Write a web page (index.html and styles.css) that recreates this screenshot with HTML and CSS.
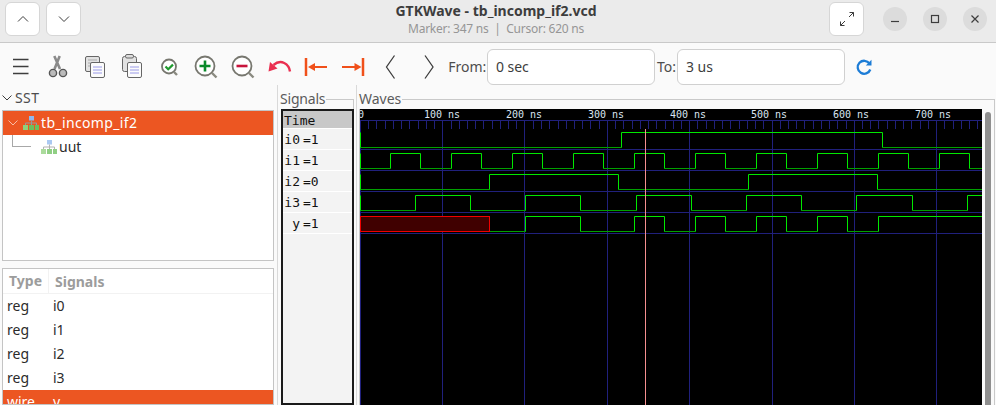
FILE: index.html
```html
<!DOCTYPE html>
<html lang="en">
<head>
  <meta charset="UTF-8">
  <meta name="viewport" content="width=device-width, initial-scale=1.0">
  <title>GTKWave - tb_incomp_if2.vcd</title>
  <link rel="stylesheet" href="styles.css">
</head>
<body>
  <!-- Title bar -->
  <header class="titlebar">
    <div class="title-left">
      <button class="head-btn"><svg width="16" height="16" viewBox="0 0 16 16"><path class="thin" d="M3 10.5 8 5.5l5 5"/></svg></button>
      <button class="head-btn"><svg width="16" height="16" viewBox="0 0 16 16"><path class="thin" d="M3 5.5l5 5 5-5"/></svg></button>
    </div>
    <div class="title-text">
      <div class="title-main">GTKWave - tb_incomp_if2.vcd</div>
      <div class="title-sub">Marker: 347 ns &nbsp;|&nbsp; Cursor: 620 ns</div>
    </div>
    <div class="title-right">
      <button class="head-btn expand"><svg width="18" height="18" viewBox="0 0 18 18"><path class="thin" d="M2.5 15.5 7 11M2.5 11.5v4h4M15.500 2.500 11 7M11.500 2.500h4v4"/></svg></button>
      <div class="win-btns">
        <button class="win-btn"><svg width="12" height="12" viewBox="0 0 12 12"><path class="win-stroke" d="M2 8.500h8"/></svg></button>
        <button class="win-btn"><svg width="12" height="12" viewBox="0 0 12 12"><rect class="win-stroke" x="2.500" y="2.500" width="7" height="7"/></svg></button>
        <button class="win-btn"><svg width="12" height="12" viewBox="0 0 12 12"><path class="win-stroke" d="M2.500 2.500l7 7M9.500 2.500l-7 7"/></svg></button>
      </div>
    </div>
  </header>

  <!-- Toolbar -->
  <div class="toolbar">
    <div class="tool"><svg width="32" height="32" viewBox="0 0 32 32"><path class="ink" d="M8 8.500h15.500M8 15.500h15.500M8 22.500h15.500"/></svg></div>
    <div class="tool"><svg width="32" height="32" viewBox="0 0 32 32"><path d="M17.700 5 12.500 18M12.300 5l5.700 13" fill="none" stroke="#8a8a8a" stroke-width="2.600"/><circle cx="11" cy="22" r="3.600" fill="#bbb" stroke="#555" stroke-width="1.400"/><circle cx="21" cy="22" r="3.600" fill="#bbb" stroke="#555" stroke-width="1.400"/></svg></div>
    <div class="tool"><svg width="32" height="32" viewBox="0 0 32 32"><rect class="page-back" x="6.500" y="5.500" width="14" height="15" rx="1.500"/><path d="M9 9h9M9 12h9M9 15h9" stroke="#aaa" fill="none"/><rect class="page-front" x="11.500" y="11.500" width="14" height="15" rx="1.500"/><path class="page-lines" d="M14 16h9M14 19h9M14 22h9"/></svg></div>
    <div class="tool"><svg width="32" height="32" viewBox="0 0 32 32"><rect class="page-back" x="6.500" y="5.500" width="14" height="15" rx="2"/><rect x="9.500" y="3.500" width="8" height="3.500" rx="1.500" fill="#ddd" stroke="#666"/><rect class="page-front" x="11.500" y="11.500" width="14" height="15" rx="1.500"/><path class="page-lines" d="M14 16h9M14 19h9M14 22h9"/></svg></div>
    <div class="tool"><svg width="32" height="32" viewBox="0 0 32 32"><circle class="lens" cx="16" cy="15.500" r="7"/><path class="handle" d="M21 21l3 3"/><path d="M12.500 15.500l2.700 2.700 4.800-4.600" fill="none" stroke="#1f9a2e" stroke-width="2.200"/></svg></div>
    <div class="tool"><svg width="32" height="32" viewBox="0 0 32 32"><circle class="lens" cx="16" cy="15" r="9.500"/><path class="handle" d="M23 22l4.500 4.500"/><path d="M16 9.500v11M10.500 15h11" fill="none" stroke="#0a8a2a" stroke-width="2.600"/></svg></div>
    <div class="tool"><svg width="32" height="32" viewBox="0 0 32 32"><circle class="lens" cx="16" cy="15" r="9.500"/><path class="handle" d="M23 22l4.500 4.500"/><path d="M10.500 15h11" fill="none" stroke="#c8143c" stroke-width="2.600"/></svg></div>
    <div class="tool"><svg width="32" height="32" viewBox="0 0 32 32"><path d="M27 20.500C26 13 18 7.500 10.500 14" fill="none" stroke="#ea2f50" stroke-width="2.400"/><path d="M5.500 20.500 7 11l7.500 6.500z" fill="#ea2f50"/></svg></div>
    <div class="tool"><svg width="32" height="32" viewBox="0 0 32 32"><path class="orange-bar" d="M6 7v18"/><path class="orange-shaft" d="M13 16h14"/><path class="orange-head" d="M8 16l7-4v8z"/></svg></div>
    <div class="tool"><svg width="32" height="32" viewBox="0 0 32 32"><path class="orange-bar" d="M26 7v18"/><path class="orange-shaft" d="M5 16h14"/><path class="orange-head" d="M24.500 16l-7-4v8z"/></svg></div>
    <div class="tool"><svg width="32" height="32" viewBox="0 0 32 32"><path class="ink" d="M20.500 4.500 12.500 16l8 11.500"/></svg></div>
    <div class="tool"><svg width="32" height="32" viewBox="0 0 32 32"><path class="ink" d="M14 4.500 22 16l-8 11.500"/></svg></div>
    <label class="range-label">From:</label>
    <input class="range-input" type="text" value="0 sec" readonly>
    <label class="range-label to">To:</label>
    <input class="range-input" type="text" value="3 us" readonly>
    <div class="refresh"><svg width="20" height="20" viewBox="0 0 20 20"><path d="M15.500 6.500A6.500 6.500 0 1 0 16.300 12.500" fill="none" stroke="#1c7cd6" stroke-width="2.300"/><path d="M17.500 2.800v5.700h-5.700z" fill="#1c7cd6"/></svg></div>
  </div>

  <main class="panes">
    <!-- SST side -->
    <section class="pane-sst">
      <div class="sst-head"><svg width="10" height="10" viewBox="0 0 10 10"><path class="thin" d="M0.500 2.500 5 7l4.500-4.500"/></svg><span>SST</span></div>
      <div class="tree-box">
        <div class="tree-row selected">
          <svg class="tree-arrow" width="10" height="10" viewBox="0 0 10 10"><path d="M0.500 2.500 5 7l4.500-4.500" fill="none" stroke="#f9bda6"/></svg>
          <svg class="hier" width="16" height="14" viewBox="0 0 16 14"><use href="#hier-icon"/></svg>
          <span>tb_incomp_if2</span>
        </div>
        <div class="tree-row child">
          <span class="tree-line"></span>
          <svg class="hier" width="16" height="14" viewBox="0 0 16 14"><use href="#hier-icon"/></svg>
          <span>uut</span>
        </div>
      </div>
      <div class="list-box">
        <div class="list-row list-head"><span class="col-type">Type</span><span class="col-name">Signals</span></div>
        <div class="list-row"><span class="col-type">reg</span><span class="col-name">i0</span></div>
        <div class="list-row"><span class="col-type">reg</span><span class="col-name">i1</span></div>
        <div class="list-row"><span class="col-type">reg</span><span class="col-name">i2</span></div>
        <div class="list-row"><span class="col-type">reg</span><span class="col-name">i3</span></div>
        <div class="list-row selected"><span class="col-type">wire</span><span class="col-name">y</span></div>
      </div>
    </section>

    <!-- Signal names -->
    <section class="pane-signals">
      <div class="group-head"><span class="group-label">Signals</span><span class="group-line"></span></div>
      <div class="signal-box">
        <div class="sig-row sig-time">Time</div>
        <div class="sig-row"><span class="sig-name">i0</span><span>=1</span></div>
        <div class="sig-row"><span class="sig-name">i1</span><span>=1</span></div>
        <div class="sig-row"><span class="sig-name">i2</span><span>=0</span></div>
        <div class="sig-row"><span class="sig-name">i3</span><span>=1</span></div>
        <div class="sig-row"><span class="sig-name">y</span><span>=1</span></div>
      </div>
    </section>

    <!-- Waves -->
    <section class="pane-waves">
      <div class="group-head"><span class="group-label">Waves</span><span class="group-line"></span></div>
      <div class="wave-body">
        <svg class="wave-canvas" width="622" height="296" viewBox="0 0 622 296">
          <!-- time ruler -->
          <path class="grid" d="M0 11.500H622"/>
          <path class="grid" d="M0.500 11V296M82.500 11V296M164.500 11V296M247.500 11V296M329.500 11V296M412.500 11V296M494.500 11V296M576.500 11V296"/>
          <path class="grid" d="M8.500 11v9M16.500 11v9M25.500 11v9M33.500 11v9M41.500 11v9M49.500 11v9M58.500 11v9M66.500 11v9M74.500 11v9M91.500 11v9M99.500 11v9M107.500 11v9M115.500 11v9M123.500 11v9M132.500 11v9M140.500 11v9M148.500 11v9M156.500 11v9M173.500 11v9M181.500 11v9M189.500 11v9M198.500 11v9M206.500 11v9M214.500 11v9M222.500 11v9M230.500 11v9M239.500 11v9M255.500 11v9M263.500 11v9M272.500 11v9M280.500 11v9M288.500 11v9M296.500 11v9M305.500 11v9M313.500 11v9M321.500 11v9M337.500 11v9M346.500 11v9M354.500 11v9M362.500 11v9M370.500 11v9M379.500 11v9M387.500 11v9M395.500 11v9M403.500 11v9M420.500 11v9M428.500 11v9M436.500 11v9M444.500 11v9M453.500 11v9M461.500 11v9M469.500 11v9M477.500 11v9M486.500 11v9M502.500 11v9M510.500 11v9M518.500 11v9M527.500 11v9M535.500 11v9M543.500 11v9M551.500 11v9M560.500 11v9M568.500 11v9M584.500 11v9M593.500 11v9M601.500 11v9M609.500 11v9M617.500 11v9"/>
          <text class="ruler" x="-2" y="9">0</text>
          <text class="ruler" x="64" y="9">100 ns</text>
          <text class="ruler" x="146" y="9">200 ns</text>
          <text class="ruler" x="228" y="9">300 ns</text>
          <text class="ruler" x="310" y="9">400 ns</text>
          <text class="ruler" x="391" y="9">500 ns</text>
          <text class="ruler" x="473" y="9">600 ns</text>
          <text class="ruler" x="555" y="9">700 ns</text>
          <!-- row separators -->
          <path class="grid" d="M0 40.500H622M0 61.500H622M0 82.500H622M0 103.500H622M0 124.500H622"/>
          <!-- low levels -->
          <path class="wave-low" d="M0 38.500H261.500M522.500 38.500H622"/>
          <path class="wave-low" d="M0 59.500H30.500M60.500 59.500H91.500M121.500 59.500H152.500M182.500 59.500H213.500M243.500 59.500H274.500M304.500 59.500H335.500M365.500 59.500H396.500M426.500 59.500H457.500M487.500 59.500H518.500M548.500 59.500H579.500M609.500 59.500H622"/>
          <path class="wave-low" d="M0 80.500H129.500M258.500 80.500H388.500M517.500 80.500H622"/>
          <path class="wave-low" d="M0 101.500H55.500M110.500 101.500H165.500M220.500 101.500H276.500M331.500 101.500H386.500M441.500 101.500H496.500M552.500 101.500H607.500"/>
          <path class="wave-low" d="M129.500 122.500H165.500M220.500 122.500H274.500M304.500 122.500H335.500M365.500 122.500H396.500M426.500 122.500H457.500M487.500 122.500H518.500"/>
          <!-- high levels and edges -->
          <path class="wave-high" d="M0.500 23.500V38.500M261.500 38.500V23.500H522.500V38.500"/>
          <path class="wave-high" d="M0.500 44.500V59.500M30.500 59.500V44.500H60.500V59.500M91.500 59.500V44.500H121.500V59.500M152.500 59.500V44.500H182.500V59.500M213.500 59.500V44.500H243.500V59.500M274.500 59.500V44.500H304.500V59.500M335.500 59.500V44.500H365.500V59.500M396.500 59.500V44.500H426.500V59.500M457.500 59.500V44.500H487.500V59.500M518.500 59.500V44.500H548.500V59.500M579.500 59.500V44.500H609.500V59.500"/>
          <path class="wave-high" d="M0.500 65.500V80.500M129.500 80.500V65.500H258.500V80.500M388.500 80.500V65.500H517.500V80.500"/>
          <path class="wave-high" d="M0.500 86.500V101.500M55.500 101.500V86.500H110.500V101.500M165.500 101.500V86.500H220.500V101.500M276.500 101.500V86.500H331.500V101.500M386.500 101.500V86.500H441.500V101.500M496.500 101.500V86.500H552.500V101.500M607.500 101.500V86.500H622"/>
          <path class="wave-high" d="M165.500 122.500V107.500H220.500V122.500M274.500 122.500V107.500H304.500V122.500M335.500 122.500V107.500H365.500V122.500M396.500 122.500V107.500H426.500V122.500M457.500 122.500V107.500H487.500V122.500M518.500 122.500V107.500H622"/>
          <rect class="wave-x" x="0.500" y="107.500" width="129" height="15"/>
          <!-- marker -->
          <path class="marker" d="M285.500 20V296"/>
        </svg>
        <div class="scroll-track"><div class="scroll-thumb"></div></div>
      </div>
    </section>
  </main>

  <svg class="defs" width="0" height="0">
    <symbol id="hier-icon" viewBox="0 0 16 14">
      <rect x="6" y="0" width="5" height="4.500" fill="#8fb8ee"/>
      <path d="M8.500 4.500V7M2.500 9V7H13.500V9M8.500 7V9" fill="none" stroke="#999"/>
      <rect x="0" y="9" width="5" height="5" fill="#8fd07c"/>
      <rect x="6" y="9" width="5" height="5" fill="#6cc05c"/>
      <rect x="12" y="9" width="4" height="5" fill="#6cc05c"/>
    </symbol>
  </svg>
</body>
</html>
```

FILE: styles.css
```css
* {
  box-sizing: border-box;
}

html, body {
  height: 100%;
}

body {
  margin: 0;
  display: flex;
  flex-direction: column;
  overflow: hidden;
  background: #fafafa;
  color: #3d3d3d;
  font-family: "Noto Sans", sans-serif;
  font-size: 14px;
}

button {
  padding: 0;
  border: none;
  font: inherit;
}

.thin {
  fill: none;
  stroke: #3d3d3d;
  stroke-width: 1;
}

.defs {
  position: absolute;
}

/* title bar */
.titlebar {
  display: grid;
  grid-template-columns: 1fr auto 1fr;
  flex: none;
  height: 43px;
  padding: 2px 9px 0 5px;
  background: #ebebeb;
  border-bottom: 1px solid #c9c9c9;
}

.title-left {
  display: flex;
  gap: 6px;
}

.title-right {
  display: flex;
  justify-content: flex-end;
  gap: 19px;
}

.head-btn {
  display: flex;
  align-items: center;
  justify-content: center;
  width: 35px;
  height: 34px;
  background: #fff;
  border: 1px solid #d6d6d6;
  border-radius: 6px;
}

.win-btns {
  display: flex;
  gap: 16px;
  padding-top: 5px;
}

.win-btn {
  display: flex;
  align-items: center;
  justify-content: center;
  width: 24px;
  height: 24px;
  background: #dcdcdc;
  border-radius: 50%;
}

.win-stroke {
  fill: none;
  stroke: #3d3d3d;
  stroke-width: 1.2;
}

.title-text {
  text-align: center;
}

.title-main {
  font-size: 14px;
  font-weight: 700;
  line-height: 18px;
}

.title-sub {
  margin-top: 1px;
  font-size: 12px;
  line-height: 16px;
  letter-spacing: -0.25px;
  color: #969696;
}

/* toolbar */
.toolbar {
  display: flex;
  align-items: center;
  flex: none;
  height: 42px;
  padding: 5px 0 0 2.5px;
}

.tool {
  display: flex;
  justify-content: center;
  flex: none;
  width: 36.9px;
}

.ink {
  fill: none;
  stroke: #3d3d3d;
  stroke-width: 1.300;
}

.page-back {
  fill: #e2e2e2;
  stroke: #666;
}

.page-front {
  fill: #fbfbfb;
  stroke: #666;
}

.page-lines {
  fill: none;
  stroke: #9a9ae8;
}

.lens {
  fill: #fff;
  stroke: #77776f;
  stroke-width: 1.800;
}

.handle {
  fill: none;
  stroke: #8a8a80;
  stroke-width: 2.400;
}

.orange-bar {
  fill: none;
  stroke: #f0501a;
  stroke-width: 2.500;
}

.orange-shaft {
  fill: none;
  stroke: #f0501a;
  stroke-width: 2;
}

.orange-head {
  fill: #f0501a;
}

.range-label {
  margin-left: 3px;
  width: 36.7px;
  flex: none;
  color: #4d4d4d;
}

.range-label.to {
  margin-left: 2px;
  width: 18px;
}

.range-input {
  flex: none;
  width: 168px;
  height: 36px;
  padding: 0 8px;
  background: #fff;
  border: 1px solid #d0d0d0;
  border-radius: 6px;
  color: #3d3d3d;
  font: inherit;
  outline: none;
}

.range-label + .range-input {
  margin-left: 2px;
}

.refresh {
  display: flex;
  margin-left: 9px;
}

/* panes */
.panes {
  display: flex;
  flex: 1;
  min-height: 0;
}

.pane-sst {
  display: flex;
  flex-direction: column;
  flex: none;
  width: 278px;
  padding: 0 3px 0 2px;
  border-right: 1px solid #d9d9d9;
}

.sst-head {
  display: flex;
  align-items: center;
  gap: 3px;
  flex: none;
  height: 25px;
  color: #4d4d4d;
  letter-spacing: 0.4px;
}

.tree-box {
  flex: none;
  height: 151px;
  background: #fff;
  border: 1px solid #c4c4c4;
}

.tree-row {
  display: flex;
  align-items: center;
  height: 24px;
  padding-bottom: 1px;
  color: #2b2b2b;
}

.tree-row.selected {
  padding-left: 5px;
  background: #ec5622;
  color: #fff;
  letter-spacing: 0.35px;
}

.tree-arrow {
  flex: none;
  margin-right: 5px;
}

.hier {
  flex: none;
  margin-right: 2px;
}

.tree-row.child {
  padding-left: 9px;
}

.tree-row.child .hier {
  opacity: 0.75;
}

.tree-line {
  flex: none;
  align-self: flex-start;
  width: 19px;
  height: 12px;
  margin-right: 10px;
  border-left: 1px solid #a8a8a8;
  border-bottom: 1px solid #a8a8a8;
}

.list-box {
  flex: 1;
  min-height: 0;
  margin-top: 7px;
  overflow: hidden;
  background: #fff;
  border: 1px solid #c4c4c4;
}

.list-row {
  display: flex;
  align-items: center;
  height: 24px;
  padding-bottom: 2px;
  color: #2b2b2b;
}

.list-row.selected {
  background: #ec5622;
  color: #fff;
}

.list-head {
  height: 25px;
  padding-bottom: 0;
  border-bottom: 1px solid #f2f2f2;
  color: #9c9c9c;
  font-weight: 700;
}

.col-type {
  flex: none;
  width: 46px;
  padding-left: 4px;
}

.col-name {
  padding-left: 4px;
}

.list-head .col-type {
  padding-left: 6px;
  border-right: 1px solid #f2f2f2;
  line-height: 24px;
}

.list-head .col-name {
  padding-left: 6px;
}

.group-head {
  display: flex;
  flex: none;
  height: 24px;
}

.group-label {
  flex: none;
  padding-top: 4px;
  line-height: 20px;
  color: #5a5a5a;
}

.pane-signals .group-label {
  letter-spacing: -0.2px;
}

.group-line {
  flex: 1;
  height: 11px;
  margin: 14px 0 0 1px;
  border-top: 1px solid #c9c9c9;
  border-right: 1px solid #c9c9c9;
}

.pane-signals {
  display: flex;
  flex-direction: column;
  flex: none;
  width: 79px;
  padding: 0 2px;
  border-right: 1px solid #d9d9d9;
}

.signal-box {
  flex: 1;
  margin-left: 1px;
  background: #f3f3f3;
  border: 2px solid #1a1a1a;
  color: #111;
  font-family: "DejaVu Sans Mono", monospace;
  font-size: 13px;
}

.sig-row {
  display: flex;
  align-items: center;
  height: 21px;
  padding-top: 1px;
  border-bottom: 1px solid #fff;
}

.sig-time {
  height: 18px;
  padding-left: 1px;
  background: #c8c8c8;
}

.sig-name {
  width: 17px;
  margin-right: 3px;
  text-align: right;
}

.pane-waves {
  display: flex;
  flex-direction: column;
  flex: 1;
  min-width: 0;
  padding: 0 1px 0 2px;
}

.wave-body {
  display: flex;
  flex: 1;
  min-height: 0;
  border-left: 1px solid #c9c9c9;
  border-right: 1px solid #c9c9c9;
}

.wave-canvas {
  display: block;
  flex: none;
  background: #000;
}

.grid {
  fill: none;
  stroke: #20207c;
}

.ruler {
  fill: #dbe6f2;
  font-family: "DejaVu Sans Mono", monospace;
  font-size: 10px;
}

.wave-low {
  fill: none;
  stroke: #00a000;
}

.wave-high {
  fill: none;
  stroke: #00e800;
}

.wave-x {
  fill: #400000;
  stroke: #f00000;
}

.marker {
  fill: none;
  stroke: #f58f8f;
}

.scroll-track {
  flex: 1;
  padding: 3px 3px 0;
}

.scroll-thumb {
  height: 100%;
  background: #8f8f8f;
  border-radius: 3px 3px 0 0;
}
```
